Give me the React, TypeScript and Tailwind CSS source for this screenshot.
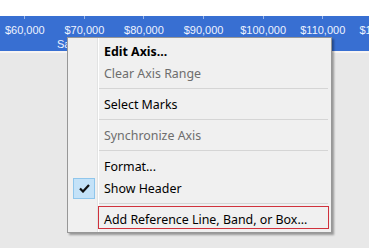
import React from 'react';

const ticks = ['$60,000', '$70,000', '$80,000', '$90,000', '$100,000', '$110,000', '$120,000'];

type Item = { label?: string; bold?: boolean; disabled?: boolean; checked?: boolean; sep?: boolean; marked?: boolean };

const items: Item[] = [
  { label: 'Edit Axis...', bold: true },
  { label: 'Clear Axis Range', disabled: true },
  { sep: true },
  { label: 'Select Marks' },
  { sep: true },
  { label: 'Synchronize Axis', disabled: true },
  { sep: true },
  { label: 'Format...' },
  { label: 'Show Header', checked: true },
  { sep: true },
  { label: 'Add Reference Line, Band, or Box...', marked: true },
];

function MenuRow({ item }: { item: Item }) {
  if (item.sep) {
    return (
      <div className="flex h-[9px] items-center pl-[30px] pr-[3px]">
        <div className="h-px w-full bg-[#d5d5d5]" />
      </div>
    );
  }
  return (
    <div className="relative flex h-[22px] items-center">
      <div className="flex w-[30px] shrink-0 items-center justify-center">
        {item.checked && (
          <div className="ml-[2px] flex h-[21px] w-[22px] items-center justify-center border border-[#8fc6ec] bg-[#c4e2f8]">
            <svg width="11" height="9" viewBox="0 0 11 9">
              <path d="M1 4.5 L4 7.5 L10 1" fill="none" stroke="#111" strokeWidth="2.2" />
            </svg>
          </div>
        )}
      </div>
      <span
        className={
          'pl-[6px] pt-[3px] text-[12.4px] leading-none ' +
          (item.bold ? 'font-bold text-black ' : '') +
          (item.disabled ? 'text-[#6d6d6d]' : 'text-black')
        }
      >
        {item.label}
      </span>
      {item.marked && (
        <span className="absolute left-[30px] right-[2px] top-[-2px] h-[23px] border border-[#d0313c]" />
      )}
    </div>
  );
}

export default function App() {
  return (
    <div className="relative h-[248px] w-[369px] overflow-hidden bg-[#e8e8e8]" style={{ fontFamily: '"Noto Sans", Arial, sans-serif' }}>
      <div className="h-[16px] bg-white" />
      <div className="h-[35px] bg-[#386fd2]" style={{ fontFamily: '"Liberation Sans", Arial, sans-serif' }}>
        <div className="ml-[-5px] flex">
          {ticks.map((t) => (
            <div key={t} className="flex w-[59.6px] shrink-0 flex-col items-center">
              <div className="h-[3px] w-px bg-[#9db8ea]" />
              <span className="mt-[6px] text-[11px] font-medium leading-none text-[#eef3ff]">{t}</span>
            </div>
          ))}
        </div>
        <div className="pl-[57px] pt-[3px] text-[11px] leading-none text-[#eef3ff]">Sales</div>
      </div>
      <div className="h-[2px] bg-[#f7f4f2]" />

      <div className="absolute left-[67px] top-[37px] w-[265px] border border-[#979797] bg-[#f0f0f0] pb-[2px] pt-[2px] shadow-[2px_2px_2px_rgba(0,0,0,0.35)]">
        <div className="absolute bottom-0 left-[29px] top-0 w-px bg-[#e2e3e3]" />
        <div className="absolute bottom-0 left-[30px] top-0 w-px bg-white" />
        {items.map((item, i) => (
          <MenuRow key={i} item={item} />
        ))}
      </div>
    </div>
  );
}
